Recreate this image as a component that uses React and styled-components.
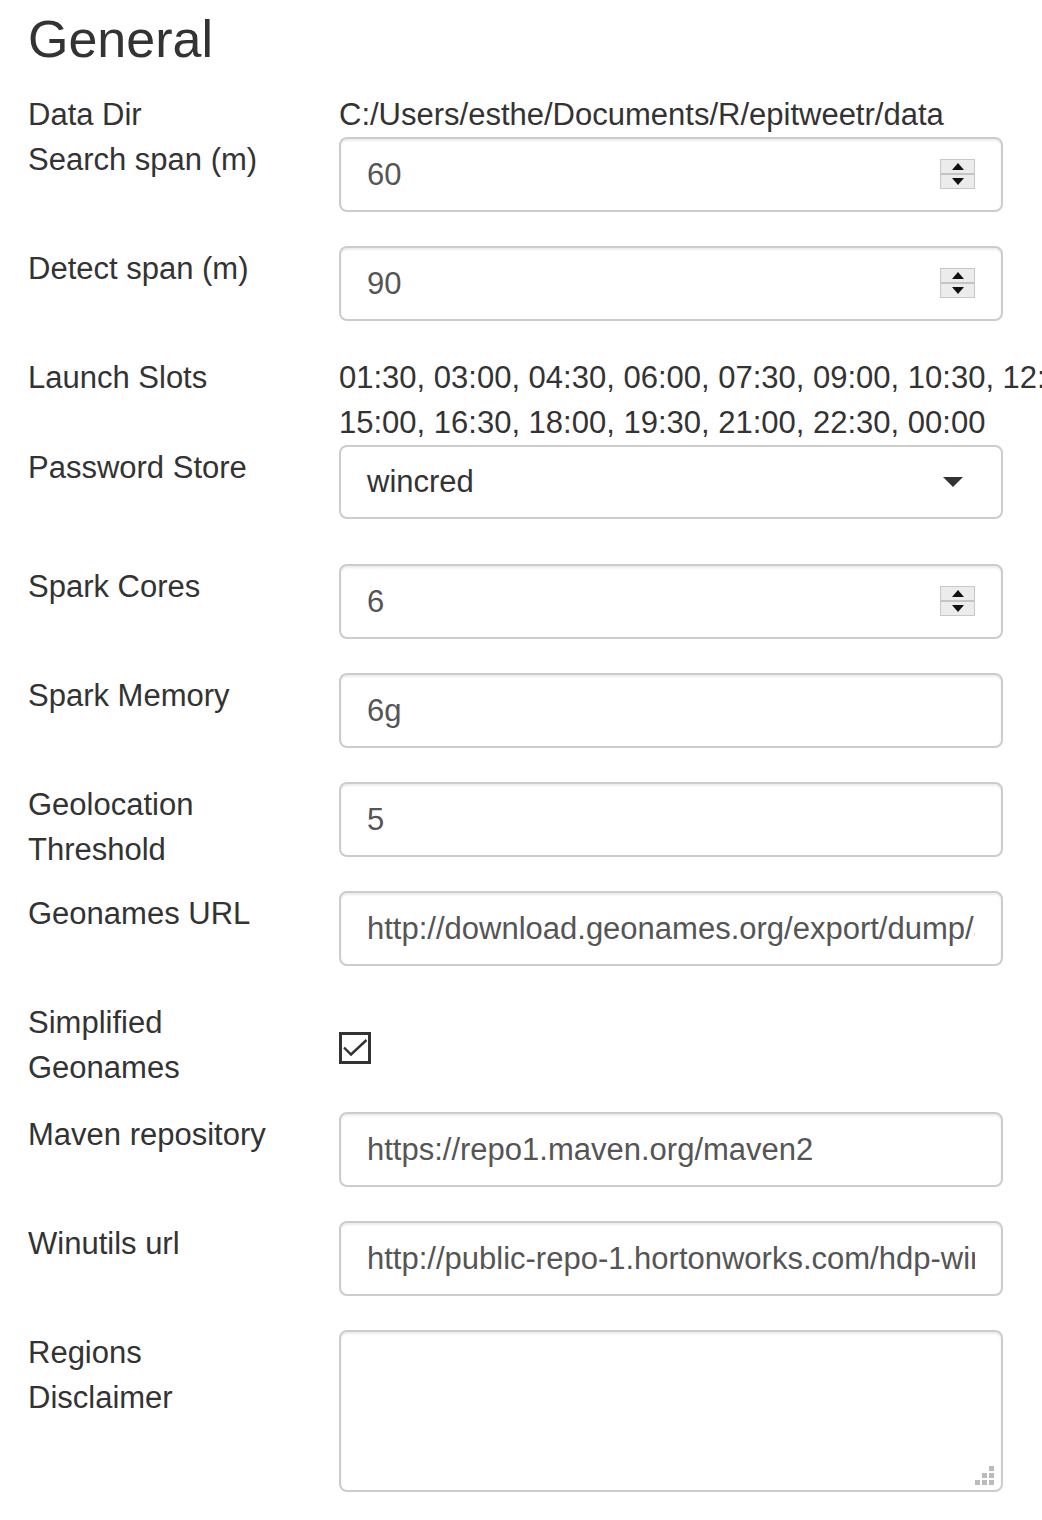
import React from 'react'
import styled, { createGlobalStyle } from 'styled-components';

const GlobalStyle = createGlobalStyle`
  html, body {
    margin: 0;
    padding: 0;
    background: #fff;
    overflow-x: hidden;
  }
  body {
    font-family: "Liberation Sans", Arial, sans-serif;
    color: #333;
  }
`

const slots = '01:30, 03:00, 04:30, 06:00, 07:30, 09:00, 10:30, 12:00, 13:30, 15:00, 16:30, 18:00, 19:30, 21:00, 22:30, 00:00';

const Spinner = () => (
  <SpinBox>
    <SpinHalf>
      <svg width="12" height="7" viewBox="0 0 12 7"><path d="M0 7 L6 0 L12 7 Z" fill="#111" /></svg>
    </SpinHalf>
    <SpinHalf>
      <svg width="12" height="7" viewBox="0 0 12 7"><path d="M0 0 L12 0 L6 7 Z" fill="#111" /></svg>
    </SpinHalf>
  </SpinBox>
);

const NumberField = ({ value }) => (
  <InputWrap>
    <TextInput type="text" value={value} readOnly />
    <Spinner />
  </InputWrap>
);

const App = () => {
  return (
    <Page>
      <GlobalStyle />
      <Title>General</Title>

      <Row>
        <Label>Data Dir</Label>
        <Value>C:/Users/esthe/Documents/R/epitweetr/data</Value>
      </Row>

      <Row>
        <Label>Search span (m)</Label>
        <div><NumberField value="60" /></div>
      </Row>

      <Row>
        <Label>Detect span (m)</Label>
        <div><NumberField value="90" /></div>
      </Row>

      <Row>
        <Label>Launch Slots</Label>
        <Value>{slots}</Value>
      </Row>

      <Row>
        <Label>Password Store</Label>
        <div>
          <SelectBox>
            <span>wincred</span>
            <svg width="20" height="10" viewBox="0 0 20 10"><path d="M0 0 L20 0 L10 10 Z" fill="#333" /></svg>
          </SelectBox>
        </div>
      </Row>

      <Row>
        <Label>Spark Cores</Label>
        <div><NumberField value="6" /></div>
      </Row>

      <Row>
        <Label>Spark Memory</Label>
        <div><InputWrap><TextInput type="text" value="6g" readOnly /></InputWrap></div>
      </Row>

      <Row>
        <Label>Geolocation Threshold</Label>
        <div><InputWrap><TextInput type="text" value="5" readOnly /></InputWrap></div>
      </Row>

      <Row>
        <Label>Geonames URL</Label>
        <div><InputWrap><TextInput type="text" value="http://download.geonames.org/export/dump/allCountries.zip" readOnly /></InputWrap></div>
      </Row>

      <Row>
        <Label>Simplified Geonames</Label>
        <CheckCell>
          <CheckBox>
            <svg width="32" height="32" viewBox="0 0 32 32">
              <path d="M5 15.5 L12 22.5 L27.5 8" fill="none" stroke="#333" strokeWidth="2.4" />
            </svg>
          </CheckBox>
        </CheckCell>
      </Row>

      <Row>
        <Label>Maven repository</Label>
        <div><InputWrap><TextInput type="text" value="https://repo1.maven.org/maven2" readOnly /></InputWrap></div>
      </Row>

      <Row>
        <Label>Winutils url</Label>
        <div><InputWrap><TextInput type="text" value="http://public-repo-1.hortonworks.com/hdp-win-alpha/winutils.exe" readOnly /></InputWrap></div>
      </Row>

      <Row>
        <Label>Regions Disclaimer</Label>
        <div>
          <AreaWrap>
            <TextArea readOnly value="" />
            <Grip width="22" height="22" viewBox="0 0 22 22">
              <rect x="14" y="0" width="5" height="5" fill="#bbb" />
              <rect x="7" y="7" width="5" height="5" fill="#bbb" />
              <rect x="14" y="7" width="5" height="5" fill="#bbb" />
              <rect x="0" y="14" width="5" height="5" fill="#bbb" />
              <rect x="7" y="14" width="5" height="5" fill="#bbb" />
              <rect x="14" y="14" width="5" height="5" fill="#bbb" />
            </Grip>
          </AreaWrap>
        </div>
      </Row>
    </Page>
  );
};

export default App;

const Page = styled.div`
  width: 100%;
  overflow: hidden;
  box-sizing: border-box;
  padding: 0 0 40px 28px;
`
const Title = styled.h2`
  font-size: 52px;
  font-weight: 400;
  line-height: 57px;
  margin: 11px 0 24px;
  color: #333;
`
const Row = styled.div`
  display: grid;
  grid-template-columns: 250px 870px;
  column-gap: 61px;
  align-items: start;
`
const Label = styled.div`
  font-size: 31px;
  line-height: 45px;
  color: #333;
`
const Value = styled.div`
  font-size: 31px;
  line-height: 45px;
  color: #333;
`
const InputWrap = styled.div`
  position: relative;
  width: 664px;
  margin: 0 0 34px;
`
const TextInput = styled.input`
  display: block;
  width: 100%;
  height: 75px;
  box-sizing: border-box;
  padding: 0 26px;
  border: 2px solid #ccc;
  border-radius: 8px;
  box-shadow: inset 0 2px 2px rgba(0, 0, 0, 0.075);
  font-family: "Liberation Sans", Arial, sans-serif;
  font-size: 31px;
  color: #555;
  background: #fff;
  outline: none;
`
const SpinBox = styled.div`
  position: absolute;
  right: 28px;
  top: 22px;
  width: 35px;
  height: 30px;
  display: flex;
  flex-direction: column;
  box-sizing: border-box;
  border: 1px solid #c8c8c8;
  background: #ececec;
`
const SpinHalf = styled.div`
  flex: 1;
  display: flex;
  align-items: center;
  justify-content: center;

  & + & {
    border-top: 2px solid #c4c4c4;
  }
`
const SelectBox = styled.div`
  width: 664px;
  height: 74px;
  margin: 0 0 45px;
  box-sizing: border-box;
  padding: 0 38px 0 26px;
  border: 2px solid #ccc;
  border-radius: 8px;
  display: flex;
  align-items: center;
  justify-content: space-between;
  font-size: 31px;
  color: #333;
`
const CheckCell = styled.div`
  padding-top: 32px;
  height: 80px;
`
const CheckBox = styled.div`
  width: 32px;
  height: 32px;
  box-sizing: border-box;
  border: 3px solid #333;
  position: relative;

  svg {
    position: absolute;
    left: -3px;
    top: -3px;
  }
`
const AreaWrap = styled.div`
  position: relative;
  width: 664px;
`
const TextArea = styled.textarea`
  display: block;
  width: 100%;
  height: 162px;
  box-sizing: border-box;
  border: 2px solid #ccc;
  border-radius: 8px;
  box-shadow: inset 0 2px 2px rgba(0, 0, 0, 0.075);
  resize: none;
  outline: none;
  font-family: "Liberation Sans", Arial, sans-serif;
  font-size: 31px;
`
const Grip = styled.svg`
  position: absolute;
  right: 6px;
  bottom: 4px;
`
